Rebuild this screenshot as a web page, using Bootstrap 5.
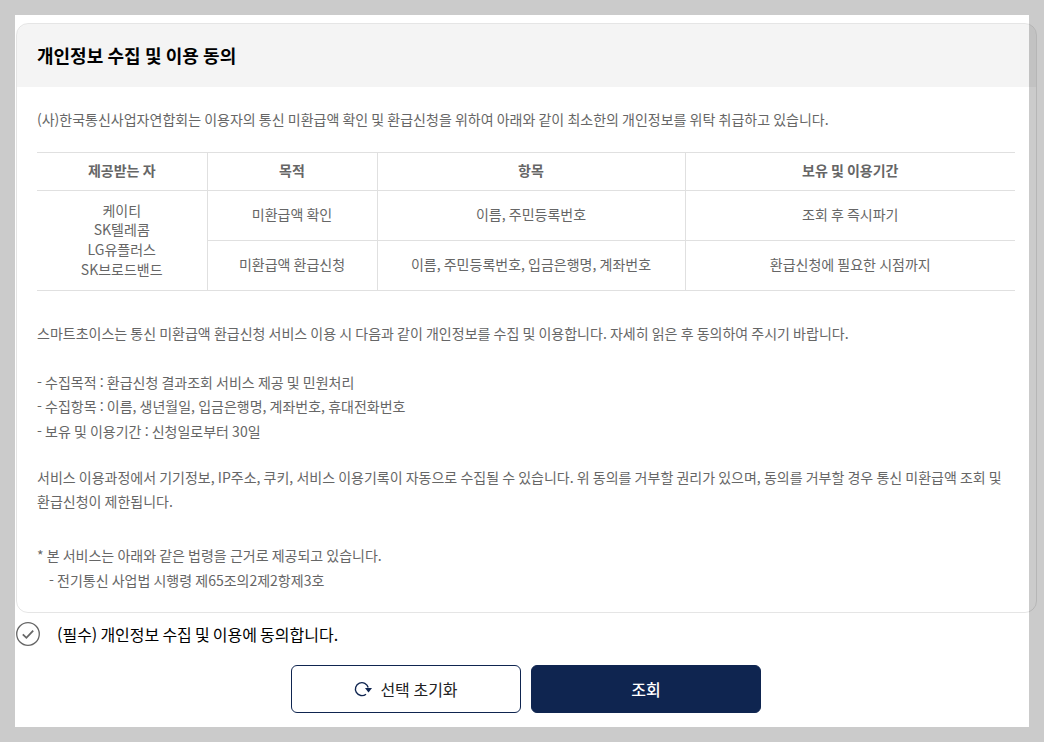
<!DOCTYPE html>
<html lang="ko">
<head>
<meta charset="utf-8">
<title>개인정보 수집 및 이용 동의</title>
<link rel="stylesheet" href="https://cdn.jsdelivr.net/npm/bootstrap@5.3.0/dist/css/bootstrap.min.css">
<style>
html,body{height:100%;overflow:hidden}
body{background:#cbcbcb;font-family:"Noto Sans CJK KR","Liberation Sans",sans-serif;font-size:14px;color:#666;word-spacing:-.055em}
.sheet{margin:15px;height:712px;width:1014px;background:#fff;padding:8px 0 0 1px}
.agree-box{width:1021px;height:590px;border:1px solid rgba(0,0,0,.1);border-radius:12px;overflow:hidden}
.agree-head{height:63px;background:rgba(0,0,0,.045);padding:0 20px;display:flex;align-items:center}
.agree-head h2{font-size:18px;font-weight:700;color:#000;margin:0}
.agree-body{padding:20px 20px 0 20px;line-height:24.5px}
.agree-body p{margin:0}
.agree-body p.tight{line-height:24px}
.terms{width:978px;table-layout:fixed;margin:20px 0 30px;border-collapse:collapse;color:#666}
.terms th,.terms td{border:1px solid #e0e0e0;text-align:center;vertical-align:middle;padding:0;line-height:19.6px;font-size:14px;color:#666}
.terms th{height:38px;font-weight:700}
.terms td{height:50px}
.terms tr>*:first-child{border-left:0}
.terms tr>*:last-child{border-right:0}
.gap-line{height:24.5px}
.gap-short{height:21.5px}
.gap-half{height:30.5px}
.indent{padding-left:12px}
.consent{height:43px;padding-bottom:2px;color:#000;font-size:16px;font-weight:400;gap:17px;margin-bottom:9px;word-spacing:-.085em}
.actions{gap:10px;padding-left:275px}
.act{width:230px;height:48px;border-radius:6px;font-size:16px;font-weight:500;display:flex;align-items:center;justify-content:center;gap:8px;padding:0;word-spacing:-.055em}
.act-line{background:#fff;border:1px solid #0f2550;color:#222;font-weight:400}
.act-solid{background:#0f2550;border:1px solid #0f2550;color:#fff}
.act-solid:hover{background:#0f2550;color:#fff}
</style>
</head>
<body>
<main class="sheet">
  <section class="agree-box">
    <header class="agree-head"><h2>개인정보 수집 및 이용 동의</h2></header>
    <div class="agree-body">
      <p>(사)한국통신사업자연합회는 이용자의 통신 미환급액 확인 및 환급신청을 위하여 아래와 같이 최소한의 개인정보를 위탁 취급하고 있습니다.</p>
      <table class="terms">
        <colgroup><col style="width:170px"><col style="width:170px"><col style="width:308px"><col style="width:330px"></colgroup>
        <thead>
          <tr><th>제공받는 자</th><th>목적</th><th>항목</th><th>보유 및 이용기간</th></tr>
        </thead>
        <tbody>
          <tr><td rowspan="2">케이티<br>SK텔레콤<br>LG유플러스<br>SK브로드밴드</td><td>미환급액 확인</td><td>이름, 주민등록번호</td><td>조회 후 즉시파기</td></tr>
          <tr><td>미환급액 환급신청</td><td>이름, 주민등록번호, 입금은행명, 계좌번호</td><td>환급신청에 필요한 시점까지</td></tr>
        </tbody>
      </table>
      <p>스마트초이스는 통신 미환급액 환급신청 서비스 이용 시 다음과 같이 개인정보를 수집 및 이용합니다. 자세히 읽은 후 동의하여 주시기 바랍니다.</p>
      <div class="gap-line"></div>
      <p>- 수집목적 : 환급신청 결과조회 서비스 제공 및 민원처리</p>
      <p>- 수집항목 : 이름, 생년월일, 입금은행명, 계좌번호, 휴대전화번호</p>
      <p>- 보유 및 이용기간 : 신청일로부터 30일</p>
      <div class="gap-short"></div>
      <p class="tight">서비스 이용과정에서 기기정보, IP주소, 쿠키, 서비스 이용기록이 자동으로 수집될 수 있습니다. 위 동의를 거부할 권리가 있으며, 동의를 거부할 경우 통신 미환급액 조회 및 환급신청이 제한됩니다.</p>
      <div class="gap-half"></div>
      <p>* 본 서비스는 아래와 같은 법령을 근거로 제공되고 있습니다.</p>
      <p class="indent">- 전기통신 사업법 시행령 제65조의2제2항제3호</p>
    </div>
  </section>
  <div class="consent d-flex align-items-center">
    <svg width="24" height="24" viewBox="0 0 24 24" fill="none" aria-hidden="true"><circle cx="12" cy="12" r="11.3" stroke="#666" stroke-width="1.3"/><path d="M6.8 12.3l3.6 3.5 6.8-7.2" stroke="#666" stroke-width="1.8"/></svg>
    <span>(필수) 개인정보 수집 및 이용에 동의합니다.</span>
  </div>
  <div class="actions d-flex">
    <button type="button" class="btn act act-line">
      <svg width="18" height="18" viewBox="0 0 18 18" fill="none" aria-hidden="true"><path d="M12 14.2A6.5 6.5 0 1 1 14.2 7.5" stroke="#0f2550" stroke-width="1.4"/><path d="M11 8h7l-3.5 4.5z" fill="#0f2550"/></svg>
      <span>선택 초기화</span>
    </button>
    <button type="button" class="btn act act-solid">조회</button>
  </div>
</main>
</body>
</html>
